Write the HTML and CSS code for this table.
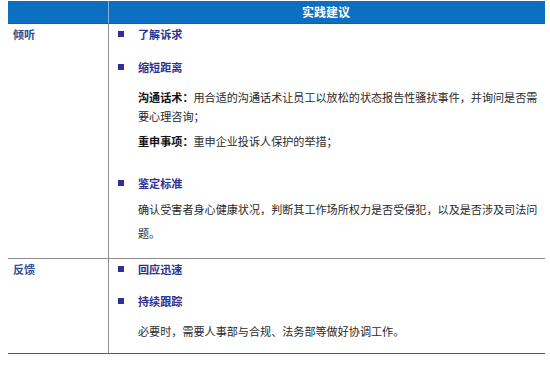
FILE: index.html
```html
<!DOCTYPE html>
<html lang="zh-CN">
<head>
<meta charset="utf-8">
<title>实践建议</title>
<link rel="stylesheet" href="styles.css">
</head>
<body>
<div class="table">
  <div class="head head-left"></div>
  <div class="head head-right">实践建议</div>

  <div class="cell-left row1">倾听</div>
  <div class="cell-right row1">
    <div class="item first"><span class="bullet"></span>了解诉求</div>
    <div class="item second"><span class="bullet"></span>缩短距离</div>
    <p class="para p1"><b>沟通话术：</b>用合适的沟通话术让员工以放松的状态报告性骚扰事件，并询问是否需<br>要心理咨询；</p>
    <p class="para p2"><b>重申事项：</b>重申企业投诉人保护的举措；</p>
    <div class="item third"><span class="bullet"></span>鉴定标准</div>
    <p class="para p3">确认受害者身心健康状况，判断其工作场所权力是否受侵犯，以及是否涉及司法问<br>题。</p>
  </div>

  <div class="cell-left row2">反馈</div>
  <div class="cell-right row2">
    <div class="item first"><span class="bullet"></span>回应迅速</div>
    <div class="item r2second"><span class="bullet"></span>持续跟踪</div>
    <p class="para p4">必要时，需要人事部与合规、法务部等做好协调工作。</p>
  </div>
</div>
</body>
</html>
```

FILE: styles.css
```css
* { box-sizing: border-box; }

html, body {
  margin: 0;
  padding: 0;
  background: #ffffff;
}

body {
  font-family: "Noto Sans CJK SC", "Noto Sans", sans-serif;
  font-size: 11.1px;
  color: #2a2a2a;
}

.table {
  display: grid;
  grid-template-columns: 101px 436px;
  width: 537px;
  margin: 1px 0 0 8px;
}

.head {
  background: #0c6fc2;
  height: 23px;
  border-bottom: 1px solid #1c5c9c;
  color: #ffffff;
  font-weight: bold;
  font-size: 12px;
  line-height: 22px;
}

.head-left {
  border-right: 1px solid #7fb0de;
}

.head-right {
  text-align: center;
  padding-right: 2px;
}

.cell-left {
  border-right: 1px solid #8c8c8c;
  color: #2c4f95;
  font-weight: bold;
  padding: 0 0 0 5px;
  line-height: 20px;
}

.cell-right {
  padding: 0 0 0 9px;
  white-space: nowrap;
}

.row1 {
  border-bottom: 1px solid #8f8f8f;
  padding-bottom: 13px;
}

.row2 {
  border-bottom: 1px solid #4e5b78;
  padding-bottom: 12px;
}

.item {
  display: flex;
  align-items: center;
  color: #2e3192;
  font-weight: bold;
  line-height: 20px;
  margin-top: 0;
}

.item.second {
  margin-top: 13px;
}

.item.third {
  margin-top: 22.5px;
}

.item.r2second {
  margin-top: 12px;
}

.bullet {
  width: 6px;
  height: 6px;
  background: #2e3192;
  margin-right: 14px;
  flex: none;
}

.para {
  margin: 0;
  padding-left: 20px;
  line-height: 20px;
  color: #2a2a2a;
}

.para b {
  color: #111111;
}

.p1 {
  line-height: 19px;
  margin-top: 10.5px;
}

.p2 {
  line-height: 19px;
  margin-top: 6px;
}

.p3 {
  line-height: 24px;
  margin-top: 4px;
}

.p4 {
  margin-top: 10px;
}
```
